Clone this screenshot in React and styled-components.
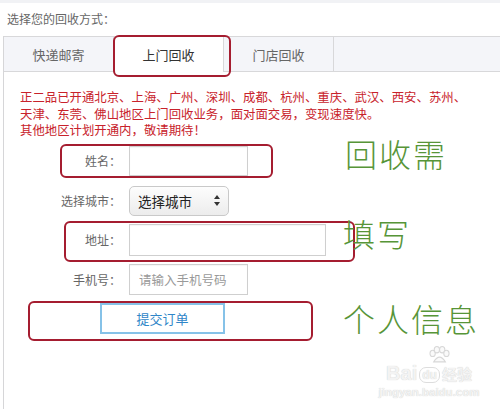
import React from 'react';
import styled, { createGlobalStyle } from 'styled-components';

const GlobalStyle = createGlobalStyle`
  html, body {
    margin: 0;
    padding: 0;
    background: #fff;
  }
  body {
    font-family: "Noto Sans CJK SC", "Noto Sans", sans-serif;
  }
`;

const Page = styled.div`
  position: relative;
  width: 500px;
  height: 409px;
  overflow: hidden;
  border-top: 3px solid #f1f2f5;
  box-sizing: border-box;
`;

const Header = styled.div`
  height: 33px;
  padding-left: 7px;
  font-size: 12px;
  line-height: 31px;
  color: #666;
`;

const Panel = styled.div`
  margin-left: 3px;
  height: 380px;
  border-left: 1px solid #d6d6d8;
`;

const TabBar = styled.div`
  display: flex;
  height: 34px;
  background: #f4f5f9;
  border-top: 1px solid #d8d8da;
  border-bottom: 1px solid #d8d8da;
`;

const Tab = styled.div`
  width: 109px;
  display: flex;
  align-items: center;
  justify-content: center;
  font-size: 13px;
  color: ${p => (p.$active ? '#333' : '#666')};
  background: ${p => (p.$active ? '#fff' : 'transparent')};
  border-right: 1px solid #d8d8da;
  margin-bottom: ${p => (p.$active ? '-1px' : '0')};
`;

const Notice = styled.div`
  margin: 17px 0 0 16px;
  font-size: 12.4px;
  line-height: 16.5px;
  color: #c8222b;
  white-space: nowrap;
`;

const Form = styled.div`
  display: grid;
  grid-template-columns: 117px auto;
  column-gap: 8px;
  row-gap: 8px;
  margin-top: 7px;
  align-items: center;
  justify-items: start;
`;

const Label = styled.div`
  justify-self: end;
  font-size: 12px;
  color: #666;
  margin-top: ${p => p.$top || 0}px;
`;

const Input = styled.div`
  box-sizing: border-box;
  width: ${p => p.$w}px;
  height: ${p => p.$h}px;
  border: 1px solid #cfcfcf;
  box-shadow: inset 0 1px 1px rgba(0, 0, 0, 0.04);
  background: #fff;
  padding-left: 9px;
  display: flex;
  align-items: center;
  font-size: 12.5px;
  color: #9a9a9a;
`;

const Select = styled.div`
  box-sizing: border-box;
  width: 100px;
  height: 30px;
  margin-top: 2px;
  border: 1px solid #c9c9c9;
  border-radius: 5px;
  background: linear-gradient(#fdfdfd, #ececec);
  display: flex;
  align-items: center;
  justify-content: space-between;
  padding: 0 8px 0 8px;
  font-size: 13.5px;
  color: #222;
`;

const SubmitButton = styled.div`
  grid-column: 1 / -1;
  margin-left: 96px;
  box-sizing: border-box;
  width: 125px;
  height: 31px;
  border: 2px solid #86c2e8;
  display: flex;
  align-items: center;
  justify-content: center;
  font-size: 13px;
  color: #2f86c8;
`;

const Mark = styled.div`
  position: absolute;
  left: ${p => p.$x}px;
  top: ${p => p.$y}px;
  width: ${p => p.$w}px;
  height: ${p => p.$h}px;
  box-sizing: border-box;
  border: 2px solid #a51d30;
  border-radius: 6px;
`;

const Note = styled.div`
  position: absolute;
  left: ${p => p.$x}px;
  top: ${p => p.$y}px;
  font-size: 32px;
  line-height: 34px;
  letter-spacing: 2px;
  font-weight: 300;
  color: #579538;
  white-space: nowrap;
`;

const Watermark = styled.div`
  position: absolute;
  left: 382px;
  top: 343px;
  width: 94px;
  display: flex;
  flex-direction: column;
  align-items: center;
  color: #f3f3f3;
  text-shadow: 0 0 1px #c6c6c6;
`;

const BrandLine = styled.div`
  display: flex;
  align-items: flex-end;
  font-family: "Liberation Sans", sans-serif;
  font-weight: bold;
  font-size: 20px;
  line-height: 19px;
`;

const Du = styled.span`
  font-size: 12px;
  line-height: 14px;
  padding: 0 2px;
  border: 1px solid #ddd;
  border-radius: 7px;
  margin: 0 2px;
`;

const Jing = styled.span`
  font-family: "Noto Sans CJK SC", sans-serif;
  font-size: 15px;
  line-height: 19px;
`;

const Domain = styled.div`
  margin-top: 3px;
  font-family: "Liberation Sans", sans-serif;
  font-weight: bold;
  font-size: 11.5px;
`;

const Paw = () => (
  <svg width="24" height="18" viewBox="0 0 22 17" style={{ marginLeft: 20 }}>
    <g fill="#fafafa" stroke="#d8d8d8" strokeWidth="1">
      <ellipse cx="5" cy="7" rx="2.5" ry="3" />
      <ellipse cx="9" cy="3.5" rx="2.5" ry="3" />
      <ellipse cx="14" cy="3.5" rx="2.5" ry="3" />
      <ellipse cx="18" cy="7" rx="2.5" ry="3" />
      <path d="M6 15 Q11.5 6 17 15 Z" />
    </g>
  </svg>
);

const SelectArrows = () => (
  <svg width="6" height="11" viewBox="0 0 6 11">
    <path d="M3 0 L6 4 L0 4 Z M0 7 L6 7 L3 11 Z" fill="#333" />
  </svg>
);

export default function App() {
  return (
    <Page>
      <GlobalStyle />
      <Header>选择您的回收方式：</Header>
      <Panel>
        <TabBar>
          <Tab>快递邮寄</Tab>
          <Tab $active>上门回收</Tab>
          <Tab>门店回收</Tab>
        </TabBar>
        <Notice>
          正二品已开通北京、上海、广州、深圳、成都、杭州、重庆、武汉、西安、苏州、
          <br />
          天津、东莞、佛山地区上门回收业务，面对面交易，变现速度快。
          <br />
          其他地区计划开通内，敬请期待！
        </Notice>
        <Form>
          <Label>姓名：</Label>
          <Input $w={119} $h={30} />
          <Label $top={2}>选择城市：</Label>
          <Select>
            选择城市
            <SelectArrows />
          </Select>
          <Label>地址：</Label>
          <Input $w={197} $h={32} />
          <Label>手机号：</Label>
          <Input $w={119} $h={31}>请输入手机号码</Input>
          <SubmitButton>提交订单</SubmitButton>
        </Form>
      </Panel>

      <Mark $x={113} $y={32} $w={118} $h={42} />
      <Mark $x={60} $y={141} $w={213} $h={34} />
      <Mark $x={64} $y={218} $w={291} $h={41} />
      <Mark $x={28} $y={298} $w={285} $h={40} />

      <Note $x={345} $y={133}>回收需</Note>
      <Note $x={343} $y={213}>填写</Note>
      <Note $x={343} $y={298}>个人信息</Note>

      <Watermark>
        <Paw />
        <BrandLine>
          Bai<Du>du</Du><Jing>经验</Jing>
        </BrandLine>
        <Domain>jingyan.baidu.com</Domain>
      </Watermark>
    </Page>
  );
}
